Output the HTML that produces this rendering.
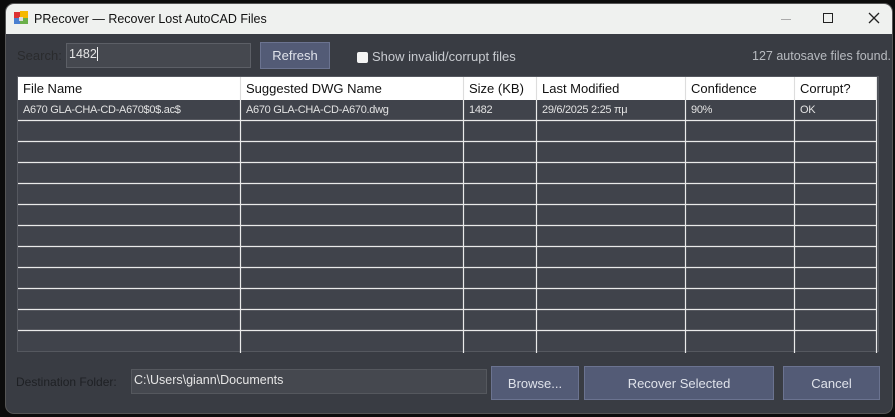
<!DOCTYPE html>
<html><head><style>
*{box-sizing:border-box;margin:0;padding:0}
body{width:895px;height:417px;background:#0c0c0c;position:relative;overflow:hidden;font-family:"Liberation Sans",sans-serif}
.win{position:absolute;left:6px;top:4px;width:886px;height:409px;background:#393c43;border-radius:8px;overflow:hidden;box-shadow:0 0 0 1px #555}
.title{position:absolute;left:0;top:0;width:100%;height:30px;background:#eff1ef;color:#111;font-size:12.5px}
.abs{position:absolute;white-space:nowrap}
.lbl{color:#c8cbd0;font-size:13px}
.tb{background:#45484f;border:1px solid #5c5f66;color:#e6e6e6;font-size:12.5px;padding:3px 2px}
.btn{background:#535b76;border:1px solid #6b7390;color:#dfe2ea;font-size:13px;display:flex;align-items:center;justify-content:center}
.grid{position:absolute;left:11px;top:72px;width:862px;height:276px;background:#40434b;border:1px solid #55585f}
.cell{position:absolute;font-size:11px;letter-spacing:-0.3px;color:#e2e2e2;white-space:nowrap}
.hdr{position:absolute;left:0;top:0;width:858px;height:23px;background:#fff}
.h{position:absolute;top:4px;font-size:13px;color:#111}
</style></head><body>
<div class="win">
 <div class="title">
  <svg class="abs" style="left:8px;top:7px" width="14" height="14" viewBox="0 0 14 14"><rect x="0" y="1" width="6" height="6" fill="#d33"/><rect x="6" y="0" width="8" height="7" fill="#f5b800"/><rect x="0" y="7" width="6" height="6" fill="#4a7fd0"/><rect x="6" y="7" width="8" height="6" fill="#6bb04a"/><rect x="5" y="6" width="4" height="4" fill="#ddd"/></svg>
  <div class="abs" style="left:28px;top:8px">PRecover — Recover Lost AutoCAD Files</div>
  <div class="abs" style="left:775px;top:15px;width:10px;height:1px;background:#aaa"></div>
  <div class="abs" style="left:817px;top:9px;width:10px;height:10px;border:1.3px solid #222"></div>
  <svg class="abs" style="left:862px;top:8px" width="12" height="12" viewBox="0 0 12 12"><path d="M1 1L11 11M11 1L1 11" stroke="#222" stroke-width="1.3"/></svg>
 </div>
 <div class="abs lbl" style="left:11px;top:44px;color:#222a">Search:</div>
 <div class="abs tb" style="left:60px;top:39px;width:185px;height:25px">1482<span style="border-left:1px solid #eee"></span></div>
 <div class="abs btn" style="left:254px;top:38px;width:70px;height:27px">Refresh</div>
 <div class="abs" style="left:351px;top:48px;width:11px;height:11px;background:#f4f4f4;border-radius:2px"></div>
 <div class="abs lbl" style="left:366px;top:45px">Show invalid/corrupt files</div>
 <div class="abs lbl" style="right:1px;top:45px;color:#b8bbc0;font-size:12.5px">127 autosave files found.</div>
 <div class="grid">
  <div class="hdr"></div>
  <div class="h" style="left:5px">File Name</div>
  <div class="h" style="left:228px">Suggested DWG Name</div>
  <div class="h" style="left:451px">Size (KB)</div>
  <div class="h" style="left:524px">Last Modified</div>
  <div class="h" style="left:673px">Confidence</div>
  <div class="h" style="left:782px">Corrupt?</div>
  <div class="cell" style="left:5px;top:27px">A670 GLA-CHA-CD-A670$0$.ac$</div>
  <div class="cell" style="left:228px;top:27px">A670 GLA-CHA-CD-A670.dwg</div>
  <div class="cell" style="left:451px;top:27px">1482</div>
  <div class="cell" style="left:524px;top:27px">29/6/2025 2:25 πμ</div>
  <div class="cell" style="left:673px;top:27px">90%</div>
  <div class="cell" style="left:782px;top:27px">OK</div>
  <svg class="abs" style="left:0;top:0" width="860" height="276">
   <g stroke="#eaeaea" stroke-width="1.2">
    <path d="M0 43.5H858M0 64.5H858M0 85.5H858M0 106.5H858M0 127.5H858M0 148.5H858M0 169.5H858M0 190.5H858M0 211.5H858M0 232.5H858M0 253.5H858"/>
    <path d="M222.5 0V276M445.5 0V276M518.5 0V276M667.5 0V276M776.5 0V276M858.5 0V276"/>
   </g>
   <path d="M222.5 0V23M445.5 0V23M518.5 0V23M667.5 0V23M776.5 0V23" stroke="#ddd"/>
  </svg>
 </div>
 <div class="abs" style="left:10px;top:371px;font-size:12px;color:#1e2024">Destination Folder:</div>
 <div class="abs tb" style="left:125px;top:365px;width:356px;height:25px;border-color:#55585e">C:\Users\giann\Documents</div>
 <div class="abs btn" style="left:485px;top:362px;width:88px;height:34px">Browse...</div>
 <div class="abs btn" style="left:578px;top:362px;width:190px;height:34px">Recover Selected</div>
 <div class="abs btn" style="left:777px;top:362px;width:97px;height:34px">Cancel</div>
</div>
</body></html>
